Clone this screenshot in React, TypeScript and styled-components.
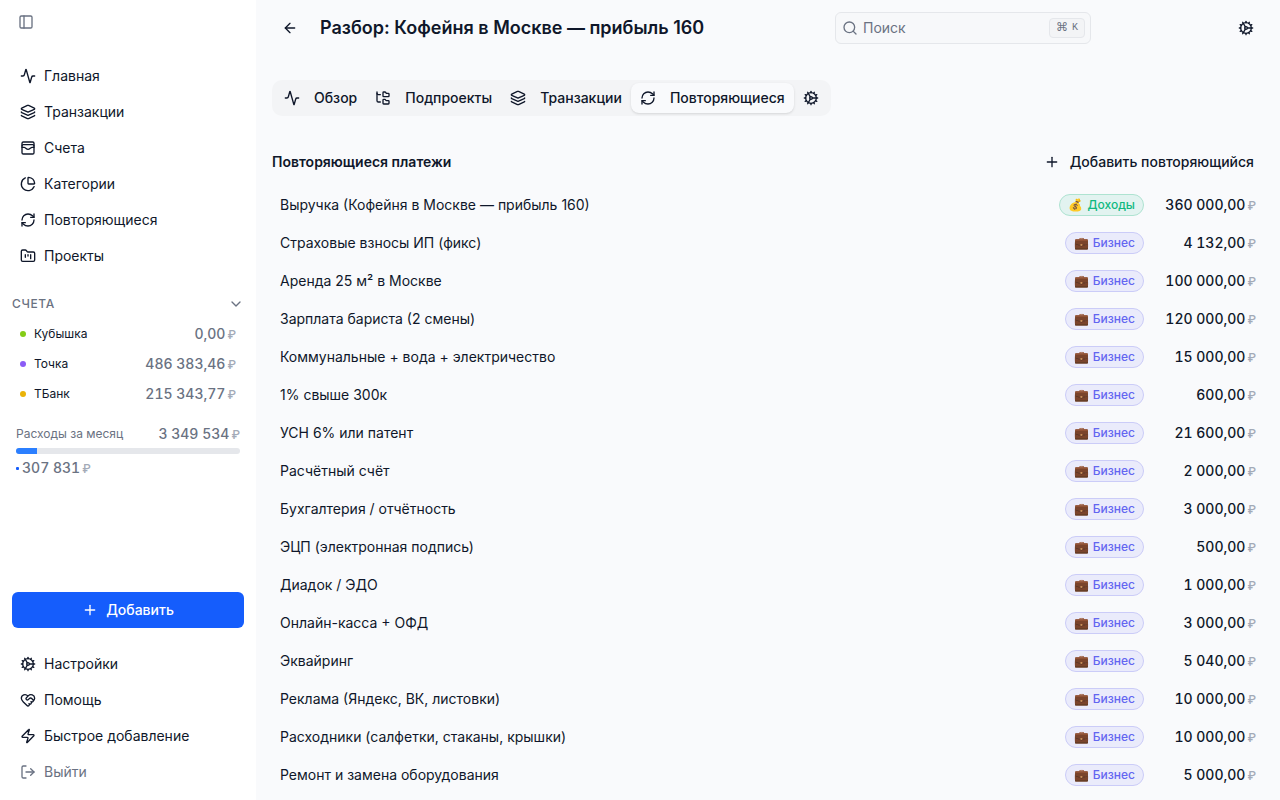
import React from "react";
import styled, { createGlobalStyle } from "styled-components";
import {
  Activity,
  ArrowLeft,
  ChartPie,
  ChevronDown,
  Cog,
  FolderKanban,
  FolderTree,
  HeartHandshake,
  Layers,
  LogOut,
  LucideIcon,
  PanelLeft,
  Plus,
  RefreshCw,
  Search,
  WalletCards,
  Zap,
} from "lucide-react";

const color = {
  page: "#f9fafc",
  sidebar: "#ffffff",
  text: "#0f172a",
  muted: "#6a7282",
  faint: "#a3aab7",
  line: "#e5e7eb",
  soft: "#f3f4f6",
  primary: "#155dfc",
  progress: "#2b7fff",
};

const GlobalStyle = createGlobalStyle`
  *, *::before, *::after { box-sizing: border-box; }
  body {
    margin: 0;
    background: ${color.page};
    color: ${color.text};
    font-family: Inter, "Noto Sans", sans-serif;
    font-size: 14px;
    line-height: 20px;
    -webkit-font-smoothing: antialiased;
  }
  button, input { font: inherit; color: inherit; letter-spacing: inherit; }
  button { border: 0; background: none; padding: 0; cursor: pointer; }
  a { color: inherit; text-decoration: none; }
  h1, h2, ul { margin: 0; padding: 0; }
  ul { list-style: none; }
  svg { display: block; flex-shrink: 0; }
`;

const Shell = styled.div`
  display: flex;
  align-items: flex-start;
  min-height: 100vh;
`;

const Sidebar = styled.aside`
  position: sticky;
  top: 0;
  display: flex;
  flex-direction: column;
  flex: 0 0 256px;
  height: 100vh;
  padding: 8px 12px 12px;
  background: ${color.sidebar};
`;

const IconButton = styled.button<{ $size: number; $muted?: boolean }>`
  display: flex;
  align-items: center;
  justify-content: center;
  flex-shrink: 0;
  width: ${(p) => p.$size}px;
  height: ${(p) => p.$size}px;
  border-radius: 6px;
  color: ${(p) => (p.$muted ? color.muted : color.text)};
`;

const Nav = styled.nav<{ $top: number }>`
  display: flex;
  flex-direction: column;
  gap: 4px;
  padding-top: ${(p) => p.$top}px;
`;

const NavLink = styled.a<{ $muted?: boolean }>`
  display: flex;
  align-items: center;
  gap: 8px;
  height: 32px;
  padding: 0 8px;
  border-radius: 6px;
  color: ${(p) => (p.$muted ? color.muted : color.text)};
`;

const SectionToggle = styled.button`
  display: flex;
  align-items: center;
  justify-content: space-between;
  height: 30px;
  margin-top: 17px;
  color: ${color.muted};
  font-size: 12px;
  line-height: 16px;
  font-weight: 500;
  letter-spacing: 0.6px;
  text-transform: uppercase;
`;

const Accounts = styled.ul`
  display: flex;
  flex-direction: column;
`;

const Account = styled.li`
  display: flex;
  align-items: center;
  gap: 8px;
  height: 30px;
  padding: 0 8px;
  font-size: 12px;
`;

const Dot = styled.span<{ $color: string }>`
  width: 6px;
  height: 6px;
  border-radius: 50%;
  background: ${(p) => p.$color};
`;

const AccountName = styled.span`
  flex: 1;
`;

const Amount = styled.span<{ $muted?: boolean }>`
  display: inline-flex;
  align-items: baseline;
  justify-content: flex-end;
  gap: 2px;
  height: 20px;
  color: ${(p) => (p.$muted ? color.muted : color.text)};
  font-size: 14px;
  line-height: 20px;
  font-weight: 500;
  font-variant-numeric: tabular-nums;
  white-space: nowrap;
`;

const Currency = styled.span`
  color: ${color.faint};
  font-size: 12px;
`;

const Spending = styled.section`
  padding: 15px 4px 0;
`;

const SpendingRow = styled.div`
  display: flex;
  align-items: center;
  justify-content: space-between;
  height: 20px;
  color: ${color.muted};
  font-size: 12px;
`;

const Track = styled.div`
  height: 6px;
  margin: 4px 0;
  overflow: hidden;
  border-radius: 3px;
  background: ${color.line};
`;

const Fill = styled.div`
  height: 100%;
  background: ${color.progress};
`;

const Spent = styled.div`
  display: flex;
  align-items: center;
  gap: 3px;
`;

const SpentMark = styled.span`
  width: 3px;
  height: 3px;
  border-radius: 1px;
  background: ${color.primary};
`;

const SidebarFooter = styled.div`
  margin-top: auto;
`;

const PrimaryButton = styled.button`
  display: flex;
  align-items: center;
  justify-content: center;
  gap: 8px;
  width: 100%;
  height: 36px;
  border-radius: 6px;
  background: ${color.primary};
  color: #ffffff;
  font-weight: 500;
`;

const Main = styled.main`
  flex: 1;
  min-width: 0;
`;

const Header = styled.header`
  display: flex;
  align-items: center;
  justify-content: space-between;
  height: 56px;
  padding: 0 16px;
`;

const TitleGroup = styled.div`
  display: flex;
  align-items: center;
  gap: 12px;
  flex: 0 0 426px;
  min-width: 0;
`;

const Title = styled.h1`
  font-size: 18px;
  line-height: 28px;
  font-weight: 600;
  white-space: nowrap;
`;

const SearchBox = styled.label`
  display: flex;
  align-items: center;
  gap: 5px;
  width: 256px;
  height: 32px;
  padding: 0 5px 0 6px;
  border: 1px solid ${color.line};
  border-radius: 6px;
  background: #f7f8fa;
  color: ${color.muted};
`;

const SearchInput = styled.input`
  flex: 1;
  min-width: 0;
  padding: 0;
  border: 0;
  outline: 0;
  background: transparent;
  &::placeholder { color: ${color.muted}; opacity: 1; }
`;

const Shortcut = styled.kbd`
  display: flex;
  align-items: center;
  gap: 4px;
  height: 20px;
  padding: 0 6px;
  border: 1px solid ${color.line};
  border-radius: 4px;
  background: ${color.soft};
  font-family: "Liberation Mono", "DejaVu Sans", monospace;
  font-size: 10px;
  line-height: 16px;
  font-weight: 500;
`;

const ShortcutModifier = styled.span`
  font-size: 12px;
`;

const Content = styled.div`
  padding: 24px 16px 0;
`;

const Tabs = styled.div`
  display: flex;
  width: fit-content;
  height: 36px;
  padding: 3px;
  border-radius: 10px;
  background: ${color.soft};
`;

const Tab = styled.button<{ $active?: boolean }>`
  display: flex;
  align-items: center;
  gap: 14px;
  padding: 0 9px;
  border-radius: 8px;
  font-weight: 500;
  background: ${(p) => (p.$active ? color.page : "transparent")};
  box-shadow: ${(p) =>
    p.$active ? "0 1px 3px rgba(0,0,0,.1), 0 1px 2px -1px rgba(0,0,0,.1)" : "none"};
`;

const SectionHeader = styled.div`
  display: flex;
  align-items: center;
  justify-content: space-between;
  height: 32px;
  margin: 30px 0 8px;
`;

const SectionTitle = styled.h2`
  font-size: 14px;
  line-height: 20px;
  font-weight: 600;
`;

const GhostButton = styled.button`
  display: flex;
  align-items: center;
  gap: 10px;
  height: 32px;
  padding: 0 10px;
  border-radius: 6px;
  font-weight: 500;
`;

const Payment = styled.li`
  display: flex;
  align-items: center;
  gap: 12px;
  height: 38px;
  padding: 0 8px;
  border-radius: 6px;
`;

const PaymentName = styled.span`
  flex: 1;
  min-width: 0;
`;

const Badge = styled.span<{ $income?: boolean }>`
  display: flex;
  gap: 4px;
  height: 22px;
  padding: 2px 8px;
  border: 1px solid ${(p) => (p.$income ? "#aee3d1" : "#cbccf8")};
  border-radius: 11px;
  background: ${(p) => (p.$income ? "#e2f3f0" : "#eaebfb")};
  color: ${(p) => (p.$income ? "#10b981" : "#6366f1")};
  font-size: 12px;
  line-height: 16px;
  font-weight: 500;
  white-space: nowrap;
`;

const PaymentAmount = styled.span`
  display: flex;
  justify-content: flex-end;
  min-width: 100px;
`;

function Money({ value, muted }: { value: string; muted?: boolean }) {
  return (
    <Amount $muted={muted}>
      {value}
      <Currency>₽</Currency>
    </Amount>
  );
}

type Link = { label: string; icon: LucideIcon; muted?: boolean };

const mainLinks: Link[] = [
  { label: "Главная", icon: Activity },
  { label: "Транзакции", icon: Layers },
  { label: "Счета", icon: WalletCards },
  { label: "Категории", icon: ChartPie },
  { label: "Повторяющиеся", icon: RefreshCw },
  { label: "Проекты", icon: FolderKanban },
];

const footerLinks: Link[] = [
  { label: "Настройки", icon: Cog },
  { label: "Помощь", icon: HeartHandshake },
  { label: "Быстрое добавление", icon: Zap },
  { label: "Выйти", icon: LogOut, muted: true },
];

const accounts = [
  { name: "Кубышка", value: "0,00", color: "#84cc16" },
  { name: "Точка", value: "486 383,46", color: "#8b5cf6" },
  { name: "ТБанк", value: "215 343,77", color: "#eab308" },
];

const tabs: Link[] = [
  { label: "Обзор", icon: Activity },
  { label: "Подпроекты", icon: FolderTree },
  { label: "Транзакции", icon: Layers },
  { label: "Повторяющиеся", icon: RefreshCw },
];

const payments: { name: string; value: string; income?: boolean }[] = [
  { name: "Выручка (Кофейня в Москве — прибыль 160)", value: "360 000,00", income: true },
  { name: "Страховые взносы ИП (фикс)", value: "4 132,00" },
  { name: "Аренда 25 м² в Москве", value: "100 000,00" },
  { name: "Зарплата бариста (2 смены)", value: "120 000,00" },
  { name: "Коммунальные + вода + электричество", value: "15 000,00" },
  { name: "1% свыше 300к", value: "600,00" },
  { name: "УСН 6% или патент", value: "21 600,00" },
  { name: "Расчётный счёт", value: "2 000,00" },
  { name: "Бухгалтерия / отчётность", value: "3 000,00" },
  { name: "ЭЦП (электронная подпись)", value: "500,00" },
  { name: "Диадок / ЭДО", value: "1 000,00" },
  { name: "Онлайн-касса + ОФД", value: "3 000,00" },
  { name: "Эквайринг", value: "5 040,00" },
  { name: "Реклама (Яндекс, ВК, листовки)", value: "10 000,00" },
  { name: "Расходники (салфетки, стаканы, крышки)", value: "10 000,00" },
  { name: "Ремонт и замена оборудования", value: "5 000,00" },
];

function NavList({ links, label, top }: { links: Link[]; label: string; top: number }) {
  return (
    <Nav aria-label={label} $top={top}>
      {links.map(({ label: text, icon: Icon, muted }) => (
        <NavLink key={text} href="#" $muted={muted}>
          <Icon size={16} />
          {text}
        </NavLink>
      ))}
    </Nav>
  );
}

export default function App() {
  const spentShare = (307831 / 3349534) * 100;
  return (
    <>
      <GlobalStyle />
      <Shell>
        <Sidebar>
          <IconButton $size={28} $muted aria-label="Свернуть меню">
            <PanelLeft size={16} />
          </IconButton>
          <NavList links={mainLinks} label="Основное меню" top={24} />
          <SectionToggle aria-expanded="true">
            Счета
            <ChevronDown size={16} />
          </SectionToggle>
          <Accounts>
            {accounts.map((a) => (
              <Account key={a.name}>
                <Dot $color={a.color} />
                <AccountName>{a.name}</AccountName>
                <Money value={a.value} muted />
              </Account>
            ))}
          </Accounts>
          <Spending>
            <SpendingRow>
              Расходы за месяц
              <Money value="3 349 534" muted />
            </SpendingRow>
            <Track>
              <Fill style={{ width: `${spentShare}%` }} />
            </Track>
            <Spent>
              <SpentMark />
              <Money value="307 831" muted />
            </Spent>
          </Spending>
          <SidebarFooter>
            <PrimaryButton>
              <Plus size={16} />
              Добавить
            </PrimaryButton>
            <NavList links={footerLinks} label="Дополнительно" top={20} />
          </SidebarFooter>
        </Sidebar>
        <Main>
          <Header>
            <TitleGroup>
              <IconButton $size={36} aria-label="Назад">
                <ArrowLeft size={16} />
              </IconButton>
              <Title>Разбор: Кофейня в Москве — прибыль 160</Title>
            </TitleGroup>
            <SearchBox>
              <Search size={16} />
              <SearchInput type="text" placeholder="Поиск" aria-label="Поиск" />
              <Shortcut>
                <ShortcutModifier>⌘</ShortcutModifier>K
              </Shortcut>
            </SearchBox>
            <IconButton $size={36} aria-label="Настройки">
              <Cog size={16} />
            </IconButton>
          </Header>
          <Content>
            <Tabs role="tablist">
              {tabs.map(({ label, icon: Icon }) => (
                <Tab
                  key={label}
                  role="tab"
                  $active={label === "Повторяющиеся"}
                  aria-selected={label === "Повторяющиеся"}
                >
                  <Icon size={16} />
                  {label}
                </Tab>
              ))}
              <Tab role="tab" aria-selected={false} aria-label="Настройки проекта">
                <Cog size={16} />
              </Tab>
            </Tabs>
            <SectionHeader>
              <SectionTitle>Повторяющиеся платежи</SectionTitle>
              <GhostButton>
                <Plus size={16} />
                Добавить повторяющийся
              </GhostButton>
            </SectionHeader>
            <ul>
              {payments.map((p) => (
                <Payment key={p.name}>
                  <PaymentName>{p.name}</PaymentName>
                  <Badge $income={p.income}>
                    <span>{p.income ? "💰" : "💼"}</span>
                    <span>{p.income ? "Доходы" : "Бизнес"}</span>
                  </Badge>
                  <PaymentAmount>
                    <Money value={p.value} />
                  </PaymentAmount>
                </Payment>
              ))}
            </ul>
          </Content>
        </Main>
      </Shell>
    </>
  );
}
